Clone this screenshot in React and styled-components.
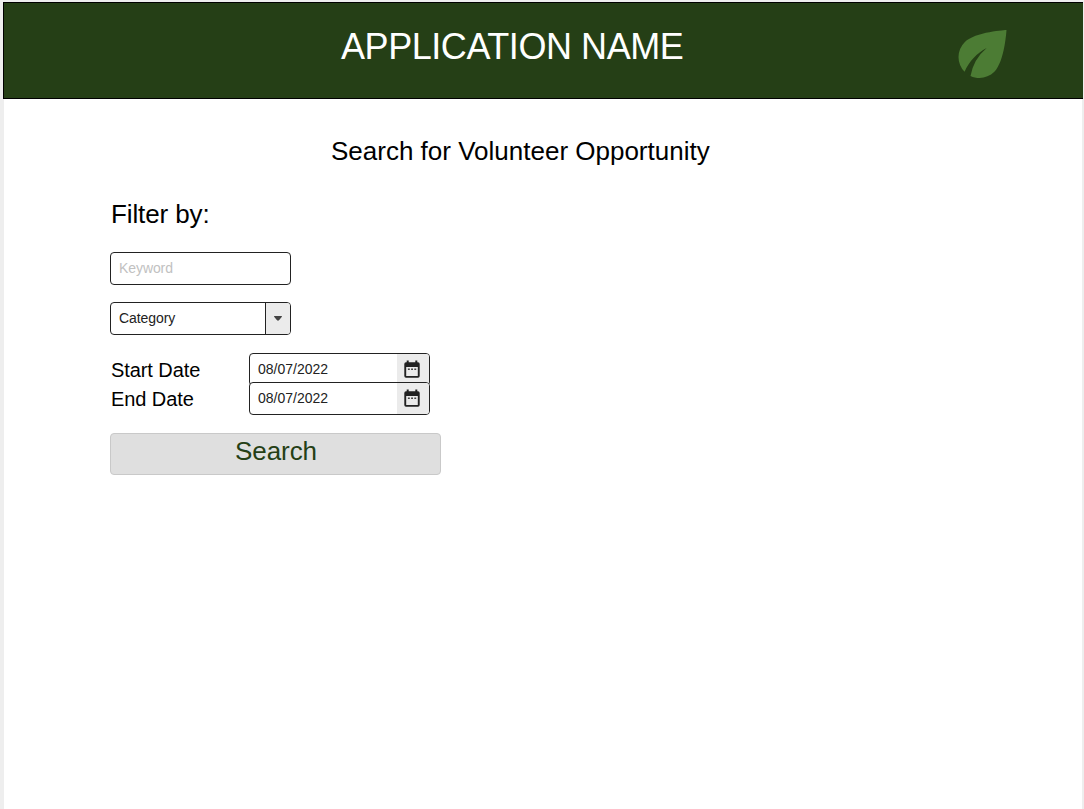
import React from "react";
import styled, { createGlobalStyle } from "styled-components";
import { MdEco } from "react-icons/md";

const Global = createGlobalStyle`
  * { box-sizing: border-box; }
  body {
    margin: 0;
    background: #eeeeee;
    font-family: "Liberation Sans", Arial, sans-serif;
    overflow: hidden;
  }
`;

const Page = styled.div`
  display: flex;
  flex-direction: column;
  height: 809px;
  padding: 2px 1px 0 3px;
  width: 1084px;
`;

const Header = styled.header`
  display: grid;
  grid-template-columns: 1fr auto;
  height: 97px;
  flex: none;
  background: #253f16;
  border: 1px solid #000;
  border-right: 0;
  padding: 23px 74px 0 337px;
`;

const AppTitle = styled.h1`
  margin: 0;
  color: #fff;
  font-size: 36px;
  font-weight: 400;
  line-height: 42px;
  letter-spacing: -0.44px;
  white-space: nowrap;
`;

const Leaf = styled(MdEco)`
  width: 73px;
  height: 72px;
  margin: -8.500px -10px 0 0;
  color: #4c7c34;
`;

const Main = styled.main`
  flex: 1;
  background: #fff;
  margin: 0 1px;
  padding: 36px 0 0 106px;
`;

const Title = styled.h2`
  margin: 0 0 0 221px;
  font-size: 26px;
  font-weight: 400;
  line-height: 32px;
  color: #000;
`;

const FilterTitle = styled.h3`
  margin: 31px 0 0 1px;
  font-size: 26px;
  font-weight: 400;
  line-height: 32px;
  letter-spacing: -0.12px;
  color: #000;
`;

const Box = styled.div`
  display: flex;
  align-items: stretch;
  width: 181px;
  height: 33px;
  border: 1px solid #222;
  border-radius: 4px;
  background: #fff;
  overflow: hidden;
  font-size: 14px;
  line-height: 30px;
  color: ${(p) => (p.$muted ? "#c1c1c1" : "#222")};
`;

const Value = styled.span`
  flex: 1;
  padding-left: 8px;
  white-space: nowrap;
  letter-spacing: ${(p) => (p.$tight ? "-0.08px" : "0")};
`;

const Addon = styled.span`
  display: flex;
  align-items: center;
  justify-content: center;
  width: ${(p) => p.$width}px;
  background: #ebebeb;
  border-left: ${(p) => (p.$divided ? "1px solid #222" : "0")};
`;

const CalendarAddon = styled(Addon)`
  align-items: flex-start;
  justify-content: flex-start;
  padding: 6px 0 0 7px;
`;

const Fields = styled.div`
  display: flex;
  flex-direction: column;
  gap: 17px;
  margin-top: 22px;
`;

const Dates = styled.div`
  margin-top: 18px;
`;

const DateRow = styled.div`
  display: grid;
  grid-template-columns: 138px 181px;
  padding-left: 1px;
  height: 29px;
`;

const DateLabel = styled.label`
  font-size: 20px;
  line-height: 34px;
  letter-spacing: -0.08px;
  color: #000;
`;

const SearchButton = styled.button`
  display: block;
  margin: 22px 0 0;
  width: 331px;
  height: 42px;
  padding: 0 0 6px 1px;
  border: 1px solid #c9c9c9;
  border-radius: 4px;
  background: #dfdfdf;
  color: #253f16;
  font: 400 26px/34px "Liberation Sans", Arial, sans-serif;
  letter-spacing: -0.1px;
`;

const Calendar = () => (
  <svg width="16" height="18" viewBox="0 0 16 18">
    <path
      fill="#222"
      fillRule="evenodd"
      d="M2.700.500h2V2.200h6.600V.500h2V2.200h.7A1.700 1.700 0 0 1 15.700 3.900V16A1.700 1.700 0 0 1 14 17.700H2A1.700 1.700 0 0 1 .3 16V3.900A1.700 1.700 0 0 1 2 2.200h.7zM2.200 7v9h11.600V7z"
    />
    <path fill="#444" d="M3.900 8.500h1.900V10H3.900zm3.200 0H9V10H7.100zm3.200 0h1.900V10h-1.900z" />
  </svg>
);

const DateField = ({ label }) => (
  <DateRow>
    <DateLabel>{label}</DateLabel>
    <Box>
      <Value>08/07/2022</Value>
      <CalendarAddon $width={32}>
        <Calendar />
      </CalendarAddon>
    </Box>
  </DateRow>
);

export default function App() {
  return (
    <>
      <Global />
      <Page>
        <Header>
          <AppTitle>APPLICATION NAME</AppTitle>
          <Leaf />
        </Header>
        <Main>
          <Title>Search for Volunteer Opportunity</Title>
          <FilterTitle>Filter by:</FilterTitle>
          <Fields>
            <Box $muted>
              <Value $tight>Keyword</Value>
            </Box>
            <Box>
              <Value $tight>Category</Value>
              <Addon $width={25} $divided>
                <svg width="8" height="5" viewBox="0 0 8 5">
                  <path fill="#444" d="M.300 0h7.400q.5.500 0 1L5 4.200q-1 .9-2 0L.3 1q-.5-.5 0-1z" />
                </svg>
              </Addon>
            </Box>
          </Fields>
          <Dates>
            <DateField label="Start Date" />
            <DateField label="End Date" />
          </Dates>
          <SearchButton>Search</SearchButton>
        </Main>
      </Page>
    </>
  );
}
